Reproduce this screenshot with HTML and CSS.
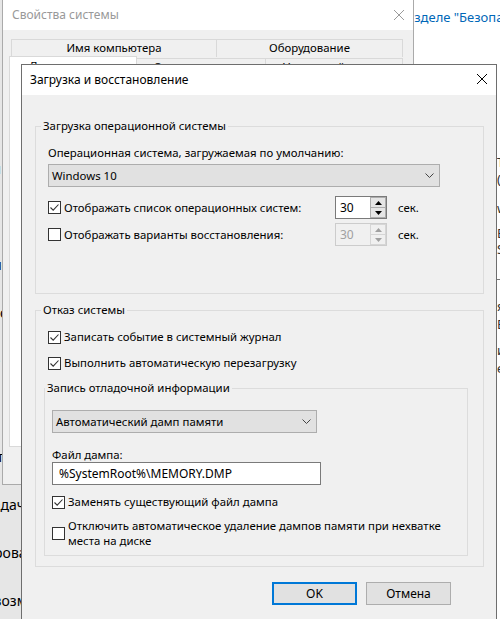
FILE: index.html
```html
<!DOCTYPE html>
<html lang="ru">
<head>
<meta charset="utf-8">
<title>Загрузка и восстановление</title>
<link rel="stylesheet" href="styles.css">
</head>
<body>
<div class="desktop">

  <div class="settings">
    <nav class="settings-nav">
      <div class="nav-item">Дисплей</div>
      <div class="nav-item">Звук</div>
      <div class="nav-item">Уведомления и действия</div>
      <div class="nav-item">Фокусировка внимания</div>
      <div class="nav-item">Питание и спящий режим</div>
      <div class="nav-item">Память</div>
      <div class="nav-item">Планшет</div>
      <div class="nav-item">Многозадачность</div>
      <div class="nav-item">Проецирование на этот компьютер</div>
      <div class="nav-item">Общие возможности</div>
      <div class="nav-item">Буфер обмена</div>
    </nav>
    <main class="settings-main">
      <p class="sec-link">Просмотреть сведения в разделе "Безопасность Windows"</p>
      <div class="edge">
        <p class="e1">Тип системы</p>
        <p class="e2">(x64)</p>
        <p class="e3">wifi</p>
        <p class="e4">Ed</p>
        <p class="e5">Sys</p>
        <div class="e-rule"></div>
        <p class="e6">я</p>
        <p class="e7">Ed</p>
        <p class="e8">и</p>
        <p class="e9">е</p>
      </div>
    </main>
  </div>

  <div class="sysprops">
    <div class="sp-title">
      <span>Свойства системы</span>
      <svg class="sp-close" width="10" height="10" viewBox="0 0 10 10"><path d="M0 0L10 10M10 0L0 10" stroke="#9a9a9a" stroke-width="1" fill="none"/></svg>
    </div>
    <div class="sp-body">
      <div class="tabrow back">
        <div class="tab t-name">Имя компьютера</div>
        <div class="tab t-hw">Оборудование</div>
      </div>
      <div class="tabrow front">
        <div class="tab active t-adv">Дополнительно</div>
        <div class="tab t-prot">Защита системы</div>
        <div class="tab t-rem">Удаленный доступ</div>
      </div>
      <div class="tab-pane"></div>
    </div>
  </div>

  <section class="dialog">
    <header class="dlg-title">
      <span>Загрузка и восстановление</span>
      <svg class="dlg-close" width="10" height="10" viewBox="0 0 10 10"><path d="M0 0L10 10M10 0L0 10" stroke="#000" stroke-width="1" fill="none"/></svg>
    </header>
    <div class="dlg-body">

      <fieldset class="group g-boot">
        <legend>Загрузка операционной системы</legend>
        <div class="field-label">Операционная система, загружаемая по умолчанию:</div>
        <div class="combo combo-os">
          <span>Windows 10</span>
          <svg class="chev" width="9" height="5" viewBox="0 0 9 5"><path d="M0.5 0.5L4.5 4.5L8.5 0.5" stroke="#444" stroke-width="1" fill="none"/></svg>
        </div>
        <div class="spin-row">
          <div class="check">
            <span class="box"><svg width="11" height="11" viewBox="0 0 11 11"><path d="M1.5 5.5L4.2 8.2L9.5 2.5" stroke="#333" stroke-width="1.1" fill="none"/></svg></span>
            <span>Отображать список операционных систем:</span>
          </div>
          <div class="spin">
            <span class="spin-val">30</span>
            <span class="spin-btns">
              <span class="spin-btn"><svg width="7" height="4" viewBox="0 0 7 4"><path d="M0 4L3.5 0L7 4Z" class="arrow"/></svg></span>
              <span class="spin-btn"><svg width="7" height="4" viewBox="0 0 7 4"><path d="M0 0L3.5 4L7 0Z" class="arrow"/></svg></span>
            </span>
          </div>
          <span class="unit">сек.</span>
        </div>
        <div class="spin-row second">
          <div class="check">
            <span class="box"></span>
            <span>Отображать варианты восстановления:</span>
          </div>
          <div class="spin disabled">
            <span class="spin-val">30</span>
            <span class="spin-btns">
              <span class="spin-btn"><svg width="7" height="4" viewBox="0 0 7 4"><path d="M0 4L3.5 0L7 4Z" class="arrow"/></svg></span>
              <span class="spin-btn"><svg width="7" height="4" viewBox="0 0 7 4"><path d="M0 0L3.5 4L7 0Z" class="arrow"/></svg></span>
            </span>
          </div>
          <span class="unit">сек.</span>
        </div>
      </fieldset>

      <fieldset class="group g-fail">
        <legend>Отказ системы</legend>
        <div class="check row-log">
          <span class="box"><svg width="11" height="11" viewBox="0 0 11 11"><path d="M1.5 5.5L4.2 8.2L9.5 2.5" stroke="#333" stroke-width="1.1" fill="none"/></svg></span>
          <span>Записать событие в системный журнал</span>
        </div>
        <div class="check row-reboot">
          <span class="box"><svg width="11" height="11" viewBox="0 0 11 11"><path d="M1.5 5.5L4.2 8.2L9.5 2.5" stroke="#333" stroke-width="1.1" fill="none"/></svg></span>
          <span>Выполнить автоматическую перезагрузку</span>
        </div>

        <fieldset class="group g-debug">
          <legend>Запись отладочной информации</legend>
          <div class="combo combo-dump">
            <span>Автоматический дамп памяти</span>
            <svg class="chev" width="9" height="5" viewBox="0 0 9 5"><path d="M0.5 0.5L4.5 4.5L8.5 0.5" stroke="#444" stroke-width="1" fill="none"/></svg>
          </div>
          <div class="field-label dump-label">Файл дампа:</div>
          <div class="textbox">%SystemRoot%\MEMORY.DMP</div>
          <div class="check row-overwrite">
            <span class="box"><svg width="11" height="11" viewBox="0 0 11 11"><path d="M1.5 5.5L4.2 8.2L9.5 2.5" stroke="#333" stroke-width="1.1" fill="none"/></svg></span>
            <span>Заменять существующий файл дампа</span>
          </div>
          <div class="check multi">
            <span class="box"></span>
            <span>Отключить автоматическое удаление дампов памяти при нехватке<br>места на диске</span>
          </div>
        </fieldset>
      </fieldset>

      <div class="buttons">
        <button class="btn default">OK</button>
        <button class="btn">Отмена</button>
      </div>
    </div>
  </section>

</div>
</body>
</html>
```
FILE: styles.css
```css
* { box-sizing: border-box; }

html, body {
  margin: 0;
  padding: 0;
}

body {
  width: 500px;
  height: 619px;
  overflow: hidden;
  background: #ffffff;
  color: #000000;
  font-family: "Noto Sans", "Open Sans", sans-serif;
  font-size: 11.4px;
  line-height: 16px;
}

.desktop {
  position: relative;
  width: 500px;
  height: 619px;
  overflow: hidden;
}

/* ---------- Settings window (background) ---------- */
.settings {
  position: absolute;
  z-index: 0;
  left: -110px;
  top: 0;
  width: 640px;
  height: 619px;
  display: grid;
  grid-template-columns: 320px 1fr;
  background: #ffffff;
  font-size: 14px;
  line-height: 20px;
}

.settings-nav {
  background: #e6e6e6;
  padding-top: 145px;
}

.nav-item {
  height: 48px;
  display: flex;
  align-items: center;
  padding-left: 52px;
  white-space: nowrap;
  color: #000;
}

.settings-main {
  padding-top: 7px;
  overflow: hidden;
}

.sec-link {
  margin: 0 0 0 29px;
  font-size: 13px;
  line-height: 20px;
  color: #0067b8;
  white-space: nowrap;
}

.edge {
  margin-left: 287px;
  margin-top: 127px;
  color: #333;
  font-size: 13px;
  line-height: 16px;
}

.edge p { margin: 0; white-space: nowrap; }
.edge .e2 { margin-top: 1px; }
.edge .e3 { margin-top: 13px; }
.edge .e4 { margin-top: 9px; }
.edge .e5 { margin-top: 0; }
.edge .e-rule { height: 1px; width: 20px; background: #777; margin: 22px 0 18px; }
.edge .e7 { margin-top: 2px; }
.edge .e8 { margin-top: 10px; }
.edge .e9 { margin-top: 2px; }

/* ---------- System properties window ---------- */
.sysprops {
  position: absolute;
  z-index: 1;
  left: 2px;
  top: -1px;
  width: 412px;
  height: 486px;
  border: 1px solid #aaaaaa;
  background: #f0f0f0;
  display: flex;
  flex-direction: column;
}

.sp-title {
  height: 30px;
  flex: none;
  background: #ffffff;
  color: #999999;
  font-size: 12px;
  display: flex;
  align-items: center;
  justify-content: space-between;
  padding: 0 9px;
}

.sp-body {
  flex: 1;
  display: flex;
  flex-direction: column;
  padding: 9px 7px 37px 6px;
}

.tabrow {
  display: flex;
  flex: none;
}

.tabrow.back {
  height: 18px;
  margin-left: 2px;
}

.tabrow.front {
  height: 19px;
  margin-top: -1px;
  align-items: flex-start;
  position: relative;
  z-index: 1;
}

.tab {
  border: 1px solid #d9d9d9;
  border-bottom: none;
  background: #f0f0f0;
  text-align: center;
  white-space: nowrap;
  overflow: hidden;
}

.tab + .tab { margin-left: -1px; }

.tabrow.back .tab { line-height: 16px; height: 18px; }
.t-name { width: 206px; }
.t-hw { width: 187px; }

.tabrow.front .tab {
  margin-top: 2px;
  height: 17px;
  line-height: 16px;
}

.tabrow.front .tab.active {
  margin-top: 0;
  height: 20px;
  background: #ffffff;
  padding-top: 1px;
}

.t-adv { width: 128px; }
.t-prot { width: 130px; }
.t-rem { width: 138px; }

.tab-pane {
  flex: 1;
  margin-top: -1px;
  background: #ffffff;
  border: 1px solid #d9d9d9;
}

/* ---------- Dialog ---------- */
.dialog {
  position: absolute;
  z-index: 2;
  left: 21px;
  top: 64px;
  width: 476px;
  height: 570px;
  background: #f0f0f0;
  border: 1px solid #6e6e6e;
  display: flex;
  flex-direction: column;
}

.dlg-title {
  height: 30px;
  flex: none;
  background: #ffffff;
  font-size: 12px;
  display: flex;
  align-items: center;
  justify-content: space-between;
  padding: 0 9px 0 8px;
}

.dlg-close { flex: none; margin-top: -2px; }

.dlg-body {
  padding: 23px 12px 0 13px;
}

.group {
  margin: 0;
  min-width: 0;
  border: 1px solid #dcdcdc;
  padding: 11px 12px 47px 12px;
}

.group legend {
  padding: 0 2px;
  margin-left: -7px;
  line-height: 16px;
}

.field-label {
  line-height: 16px;
  white-space: nowrap;
}

.combo {
  display: flex;
  align-items: center;
  justify-content: space-between;
  height: 23px;
  border: 1px solid #adadad;
  background: #e1e1e1;
  padding: 0 5px 0 3px;
  white-space: nowrap;
}

.combo-os {
  width: 392px;
  margin-top: 3px;
}

.spin-row {
  display: grid;
  grid-template-columns: 287px 52px auto;
  align-items: center;
  height: 23px;
  margin-top: 9px;
}

.spin-row.second { margin-top: 4px; }

.check {
  display: flex;
  align-items: center;
  gap: 3px;
  white-space: nowrap;
  line-height: 16px;
}

.box {
  flex: none;
  width: 13px;
  height: 13px;
  border: 1px solid #333333;
  background: #ffffff;
  display: flex;
}

.spin {
  height: 23px;
  display: flex;
  border: 1px solid #7a7a7a;
  background: #ffffff;
}

.spin-val {
  flex: 1;
  padding-left: 4px;
  line-height: 21px;
  font-size: 12px;
}

.spin-btns {
  width: 16px;
  display: flex;
  flex-direction: column;
}

.spin-btn {
  flex: 1;
  display: flex;
  align-items: center;
  justify-content: center;
  border: 1px solid #adadad;
  background: #e5e5e5;
}

.spin-btn + .spin-btn { border-top: none; }

.arrow { fill: #000000; }

.spin.disabled {
  border-color: #cccccc;
  background: #f0f0f0;
  color: #a0a0a0;
}

.spin.disabled .spin-btn {
  border-color: #d6d6d6;
  background: #f0f0f0;
}

.spin.disabled .arrow { fill: #a0a0a0; }

.unit { margin-left: 11px; }

.g-fail {
  margin-top: 8px;
  padding-bottom: 10px;
}

.row-log { height: 16px; }
.row-reboot { height: 16px; margin-top: 10px; }

.g-debug {
  margin: 9px 3px 0 -4px;
  padding: 14px 7px 7px 7px;
}

.combo-dump { width: 265px; }

.dump-label {
  margin-top: 14px;
  line-height: 15px;
}

.textbox {
  width: 269px;
  height: 23px;
  border: 1px solid #7a7a7a;
  background: #ffffff;
  padding-left: 6px;
  line-height: 21px;
  white-space: nowrap;
  font-size: 12px;
}

.row-overwrite {
  height: 16px;
  margin-top: 9px;
}

.check.multi {
  margin-top: 8px;
  height: 30px;
  line-height: 15px;
}

.buttons {
  display: flex;
  justify-content: flex-end;
  gap: 9px;
  margin-top: 15px;
  padding-right: 33px;
}

.btn {
  width: 85px;
  height: 23px;
  padding: 0;
  border: 1px solid #adadad;
  background: #e1e1e1;
  color: #000000;
  font: inherit;
  font-size: 12px;
}

.btn.default {
  border: 2px solid #0078d7;
}
```
